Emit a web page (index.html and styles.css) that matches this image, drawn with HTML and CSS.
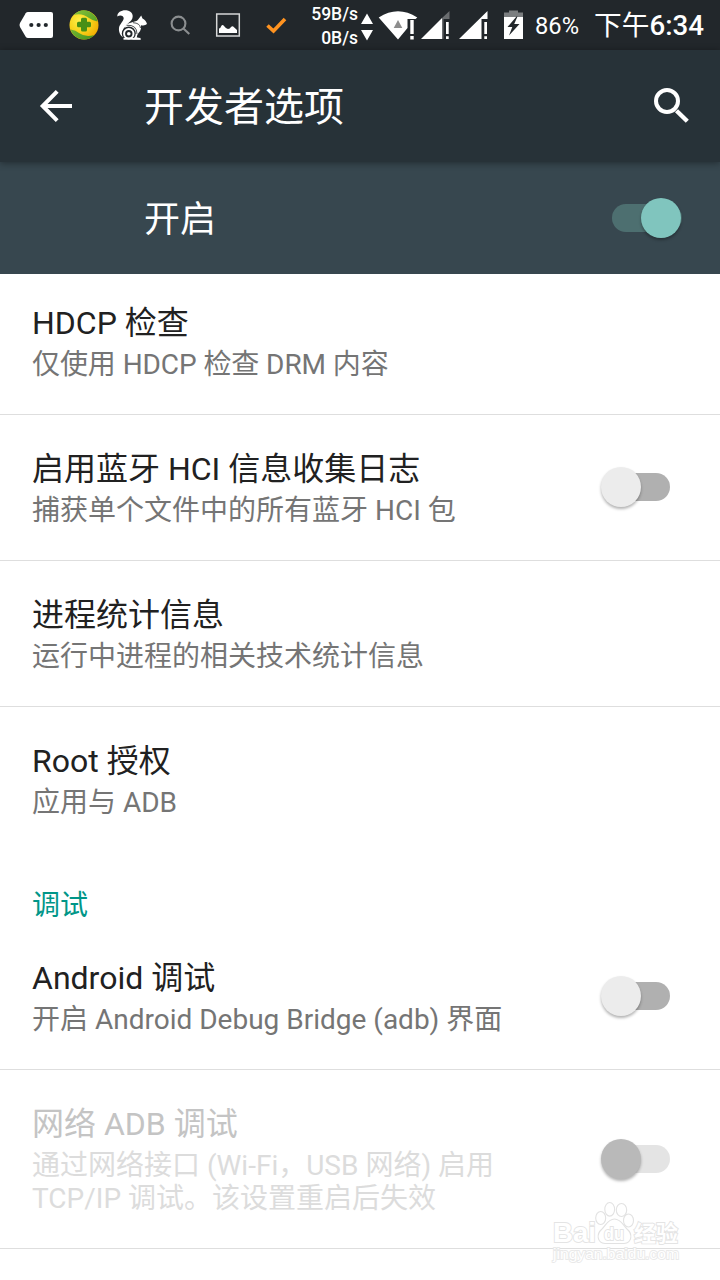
FILE: index.html
```html
<!DOCTYPE html>
<html lang="zh-CN">
<head>
<meta charset="utf-8">
<title>开发者选项</title>
<link rel="stylesheet" href="styles.css">
</head>
<body>
<div class="screen">
  <div class="status">
    <div class="notifications">
      <svg width="35" height="50" viewBox="18 0 35 50"><path d="M28 12H51Q53 12 53 14V36Q53 38 51 38H28Q26.500 38 25.700 36.700L20 27Q19 25 20 23L25.700 13.300Q26.500 12 28 12Z" fill="#fff"/><g fill="#22272b"><circle cx="31.300" cy="25" r="2.100"/><circle cx="38.600" cy="25" r="2.100"/><circle cx="45.800" cy="25" r="2.100"/></g></svg>
      <svg width="30" height="50" viewBox="69 0 30 50"><defs><radialGradient id="ball" cx=".35" cy=".35" r=".75"><stop offset="0" stop-color="#fff04a"/><stop offset=".5" stop-color="#f8d41b"/><stop offset="1" stop-color="#f0a800"/></radialGradient><linearGradient id="leaf" x2="1" y2="1"><stop offset="0" stop-color="#8cc63c"/><stop offset="1" stop-color="#3f8f1c"/></linearGradient></defs><circle cx="84" cy="25" r="14.500" fill="url(#ball)"/><path d="M73.500 15Q82 7 91 12.500Q96.500 16 97.500 21.500Q93 21 89 18Q82 12.500 73.500 15ZM94.500 35Q86 42.500 77 37.500Q72 35 70.700 29.500Q76 30 79 33Q85 37.500 94.500 35Z" fill="url(#leaf)"/><path d="M82.500 17.700H85.500Q87 17.700 87 19.200V21.700H89.500Q91 21.700 91 23.200V25.700Q91 27.200 89.500 27.200H87V30Q87 31.500 85.500 31.500H82.500Q81 31.500 81 30V27.200H78.500Q77 27.200 77 25.700V23.200Q77 21.700 78.500 21.700H81V19.200Q81 17.700 82.500 17.700Z" fill="#478f16"/></svg>
      <svg width="32" height="50" viewBox="116 0 32 50"><path d="M117.300 16.500C117.200 12 122 9.800 126.500 10.300C132 11 134.400 16 131.500 20C129 23 124 26.500 123 31C122.300 34 122.700 35.500 123.500 37.500C120.500 36 118.500 32 119 28C119.300 24.500 123 22 123.700 18.500C123.800 15.500 120 14.500 117.300 16.500Z" fill="#fff"/><path d="M125 26.500C128 22.500 133 22.300 137 20.800L138.200 19.500L141.200 15.500L142.500 18.500Q146 20 147 24Q145 26 141 25.200Q141.500 30 138.500 33Q136.500 35.500 136.700 37.500Q139.500 37.200 141 39.500H127Z" fill="#fff"/><circle cx="128.800" cy="33.500" r="7" fill="#22272b"/><circle cx="128.800" cy="33.700" r="4.700" fill="none" stroke="#fff" stroke-width="2"/><circle cx="128.800" cy="33.700" r="1.800" fill="#fff"/><path d="M123.500 38.800H140.500" stroke="#fff" stroke-width="1.800"/><path d="M126.500 25.300Q137 24.500 137 34M133 22.700Q140 23 140.500 28" fill="none" stroke="#22272b" stroke-width=".8"/></svg>
      <svg width="22" height="50" viewBox="169 0 22 50"><g fill="none" stroke="#8b8e90" stroke-width="2.100"><circle cx="178.500" cy="23.500" r="6.900"/><path d="M183.400 28.400L189.300 34"/></g></svg>
      <svg width="26" height="50" viewBox="215 0 26 50"><rect x="216.700" y="14" width="22.600" height="22" fill="none" stroke="#d5d6d7" stroke-width="1.500"/><path d="M219 33V28.500Q220.500 28.300 221 26.500Q222.500 24 224 26Q226 28.800 228 29Q230 28.800 231 27Q232.500 25.500 234 27.200L237 30V33Z" fill="#fff"/></svg>
      <svg width="22" height="50" viewBox="265 0 22 50"><path d="M267.500 25.500L273.500 31L285 19" fill="none" stroke="#ff9320" stroke-width="3.600"/></svg>
    </div>
    <div class="speed"><span>59B/s</span><span>0B/s</span></div>
    <svg class="signals" width="166" height="50" viewBox="359 0 166 50">
      <path d="M361 24L367 13.500L373 24ZM361 30H373L367 40.500Z" fill="#fff"/>
      <path d="M378.700 17.500Q398 5 417.300 17.500L415.500 19H407.500V28L398 39.500Z" fill="#fff"/><path d="M398 20L402.300 28H393.700Z" fill="#8d8d8d"/><path d="M410.300 20H413.700V34H410.300ZM410.300 36H413.700V39.500H410.300Z" fill="#fff"/>
      <path d="M421 39L442 18V39Z" fill="#fff"/><path d="M442 18L449.500 11V19H443.500V39H442Z" fill="#6a6d70"/><path d="M446 22H448.700V34H446ZM446 36.200H448.700V39H446Z" fill="#fff"/>
      <path d="M459 39L487.500 11V19H481.500V39Z" fill="#fff"/><path d="M484.300 22H487V34H484.300ZM484.300 36.200H487V39H484.300Z" fill="#fff"/>
      <path d="M509 10.500H518V12.500H523V17H504V12.500H509Z" fill="#7b7e80"/><path d="M504 17H523V39H504Z" fill="#fff"/><path d="M516.500 16.500L507.500 27H512.300L509 35.500L519.500 24H514.200L517.500 16.500Z" fill="#22272b"/>
    </svg>
    <span class="percent">86%</span>
    <span class="clock">下午<b>6:34</b></span>
  </div>
  <div class="toolbar">
    <svg width="34" height="34" viewBox="39 89 34 34"><path d="M72 106H43M57.200 91.300L42.700 106L57.200 120.700" fill="none" stroke="#fff" stroke-width="4"/></svg>
    <h1 class="heading">开发者选项</h1>
    <svg width="38" height="38" viewBox="652 87 38 38"><g fill="none" stroke="#fff" stroke-width="4"><circle cx="667" cy="101" r="11"/><path d="M676.500 110.700L687.300 121.300" stroke-width="4.400"/></g></svg>
  </div>
  <div class="master"><span class="state">开启</span><i class="switch on"></i></div>
  <div class="list">
    <div class="row first"><div class="text"><div class="title">HDCP 检查</div><div class="summary tight">仅使用 HDCP 检查 DRM 内容</div></div></div>
    <div class="row"><div class="text"><div class="title">启用蓝牙 HCI 信息收集日志</div><div class="summary">捕获单个文件中的所有蓝牙 HCI 包</div></div><i class="switch"></i></div>
    <div class="row"><div class="text"><div class="title">进程统计信息</div><div class="summary">运行中进程的相关技术统计信息</div></div></div>
    <div class="row last"><div class="text"><div class="title">Root 授权</div><div class="summary">应用与 ADB</div></div></div>
    <div class="section">调试</div>
    <div class="row"><div class="text"><div class="title">Android 调试</div><div class="summary">开启 Android Debug Bridge (adb) 界面</div></div><i class="switch"></i></div>
    <div class="row disabled"><div class="text"><div class="title">网络 ADB 调试</div><div class="summary">通过网络接口 (Wi-Fi，USB 网络) 启用<br>TCP/IP 调试。该设置重启后失效</div></div><i class="switch"></i></div>
  </div>
  <svg class="watermark" width="136" height="66" viewBox="548 1200 136 66">
    <g class="wm-shape"><ellipse cx="600.700" cy="1218" rx="5" ry="6.500"/><ellipse cx="609.700" cy="1209.300" rx="4.900" ry="6.800"/><ellipse cx="621.500" cy="1210" rx="5.200" ry="6.500"/><ellipse cx="628.500" cy="1220.500" rx="5" ry="6.500"/><path d="M614.500 1219C608 1219 606 1225 602 1229C596 1234 597 1243 605 1243.500C610 1243.500 619 1243.500 624 1243.500C632 1243 633 1234 627 1229C623 1225 621 1219 614.500 1219Z"/></g>
    <g class="wm-text"><text x="553" y="1242" font-size="28" textLength="43" lengthAdjust="spacingAndGlyphs">Bai</text><text x="604" y="1240" font-size="18" textLength="20" lengthAdjust="spacingAndGlyphs">du</text><text x="634" y="1241" font-size="22" textLength="44">经验</text><text class="wm-url" x="553" y="1259" font-size="15" textLength="126" lengthAdjust="spacingAndGlyphs">jingyan.baidu.com</text></g>
  </svg>
</div>
</body>
</html>
```
FILE: styles.css
```css
* { box-sizing: border-box; }
body { margin: 0; background: #fff; font-family: Roboto, "Noto Sans CJK SC", sans-serif; }
svg { display: block; flex: none; }
.screen { position: relative; width: 720px; height: 1280px; overflow: hidden; background: #fff; }

.status { display: flex; height: 50px; padding-left: 18px; background: #22272b; color: #fff; white-space: nowrap; }
.notifications { display: grid; grid-template-columns: 51px 47px 53px 46px 50px 22px; }
.speed { display: flex; flex-direction: column; align-items: flex-end; width: 71px; padding-top: 2px; font-size: 17.5px; font-weight: 500; line-height: 24px; }
.signals { margin-left: 1px; }
.percent { width: 59px; padding-left: 10px; font-size: 23.7px; line-height: 52px; }
.clock { padding-left: 10px; font-size: 27.7px; line-height: 52px; }
.clock b { font-weight: 500; }

.toolbar { position: relative; z-index: 1; display: flex; align-items: center; height: 112px; padding: 0 30px 0 39px; background: #273238; box-shadow: 0 1px 7px rgba(0, 0, 0, .4); }
.heading { flex: 1; margin: 0 0 0 71px; padding-top: 4px; color: #fff; font-size: 40px; font-weight: 400; line-height: 50px; }
.master { display: flex; align-items: center; justify-content: space-between; height: 112px; padding: 0 38px 0 144px; background: #37474f; color: #fff; font-size: 36px; }
.state { padding-bottom: 4px; }

.row { display: flex; align-items: center; justify-content: space-between; min-height: 146px; padding: 35px 50px 33px 32px; border-bottom: 1px solid #dedede; }
.row.first { min-height: 141px; padding-top: 30px; }
.row.last { min-height: 145px; border-bottom: 0; }
.title { margin-bottom: 6px; color: #212121; font-size: 32px; line-height: 38px; }
.summary { color: #757575; font-size: 28px; line-height: 33px; }
.tight { letter-spacing: -.08px; }
.section { height: 72px; padding: 37px 32px 0; color: #009688; font-size: 28px; line-height: 33px; }
.disabled .title { color: #c4c4c4; }
.disabled .summary { color: #dcdcdc; }

.switch { position: relative; flex: none; width: 70px; height: 28px; margin-bottom: 3px; border-radius: 14px; background: linear-gradient(#b0b0b0, #b0b0b0) 14px 0 / 56px 28px no-repeat; }
.switch::after { content: ""; position: absolute; left: 1px; top: -6px; width: 40px; height: 40px; border-radius: 50%; background: #ececec; box-shadow: 0 2px 3px rgba(0, 0, 0, .3); }
.switch.on { margin-bottom: 0; background: linear-gradient(#4d6f70, #4d6f70); }
.switch.on::after { left: auto; right: 1px; background: #80c5be; }
.disabled .switch { margin-bottom: 2px; background-image: linear-gradient(#e4e4e4, #e4e4e4); }
.disabled .switch::after { background: #b9b9b9; }

.watermark { position: absolute; left: 548px; top: 1200px; }
.wm-shape { fill: #fff; stroke: #e2e2e2; stroke-width: 1.1; }
.wm-text { fill: #fff; stroke: #e4e4e4; stroke-width: 1.8; paint-order: stroke; font-family: "Liberation Sans", "Noto Sans CJK SC", sans-serif; font-weight: 700; }
.wm-url { font-weight: 400; stroke: #e9e9e9; }
```
